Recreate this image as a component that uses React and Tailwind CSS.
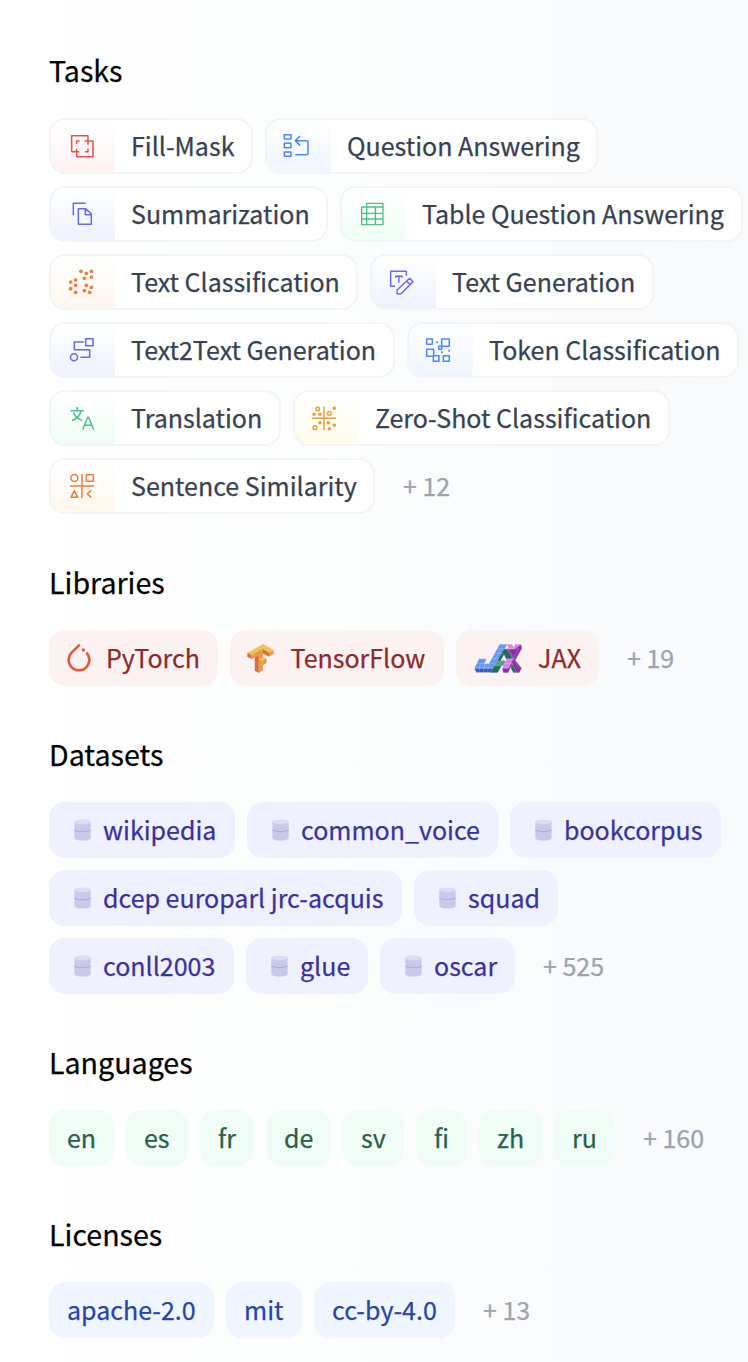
function Icon({ className, children }) {
  return (
    <svg
      viewBox="0 0 72 72"
      className={`mr-0.5 size-6 overflow-visible ${className}`}
      fill="none"
      stroke="currentColor"
      strokeWidth="4.6"
      strokeLinejoin="round"
    >
      {children}
    </svg>
  );
}

const dots = (list, r) =>
  list.map(([x, y]) => <circle key={`${x}-${y}`} cx={x} cy={y} r={r} fill="currentColor" stroke="none" />);

const icons = {
  mask: (
    <>
      <path d="M5 53V5h49v27M5 53h23M20 44v24h49V21H44M20 31V21h9M54 44v9h-9" />
    </>
  ),
  qa: (
    <>
      <path d="M-5 2h20v13H-5zM-5 28h20v13H-5zM-5 54h20v13H-5zM42 6 28 20l14 14M29 20h33q4 0 4 4v34q0 4-4 4H28" />
    </>
  ),
  summary: <path d="M10 40V4h37M25 20h22l17 16v31H25zM46 20v18h18" />,
  table: <path strokeWidth="4" d="M17 15V4h49v11M2 15h64v53H2zM2 34h64M2 51h64M17 15v53M43 15v53" />,
  textClass: dots(
    [[33, 4], [49, 10], [64, 4], [64, 21], [43, 25], [2, 36], [17, 30], [17, 46], [2, 56], [17, 67], [49, 46], [64, 52], [43, 62], [59, 67]],
    5.6
  ),
  textGen: (
    <path strokeWidth="4.4" d="M12 49H-1V4h47v13M14 23v-4h19v4M23.500 19v19M56 25l10 10-36 36H18V60zM47 33l11 11" />
  ),
  t2t: (
    <>
      <path d="M47 2h22v21H47zM41 12H13v23h46v23H31" />
      <circle cx="12" cy="58" r="10.500" />
    </>
  ),
  token: (
    <>
      <path d="M-4 3h17v16H-4zM41 3h23v22H41zM32 25h9v9h-9zM-4 34h21v21H-4zM16 53h17v17H16zM46 53h18v17H46z" />
      {dots([[27, 13], [42, 43], [63, 38]], 3)}
    </>
  ),
  translation: (
    <>
      <path d="M2 14h40M22 3v11M10 20q8 16 26 24M33 15Q29 34 6 44" />
      <path d="M38 71l15-37h3l15 37M44 58h21" />
    </>
  ),
  zeroShot: (
    <>
      <path d="M30 2v71M-6 37h72" />
      <circle cx="11" cy="9" r="5.500" />
      <circle cx="46" cy="22" r="5.500" />
      <circle cx="3" cy="65" r="5.500" />
      {dots([[61, 7], [0, 25], [18, 25], [18, 50], [43, 50], [61, 58], [46, 68]], 5.3)}
    </>
  ),
  similarity: (
    <>
      <circle cx="13" cy="12" r="10.500" />
      <path d="M36 0v73M0 36h72M49 2h21v20H49zM13 50l10 20H3zM64 49 52 59.500 64 70" />
    </>
  ),
};

const tones = {
  red: "to-[#fdf2f2] text-[#e5524c]",
  blue: "to-[#eff5ff] text-[#4d88f3]",
  indigo: "to-[#eff1ff] text-[#6a69ee]",
  green: "to-[#effdf5] text-[#52bd88]",
  orange: "to-[#fff7ee] text-[#ec7f3e]",
  yellow: "to-[#fefcec] text-[#e5a03c]",
};

const tasks = [
  [
    ["Fill-Mask", "mask", "red", "w-[204px]"],
    ["Question Answering", "qa", "blue", "w-[333px]"],
  ],
  [
    ["Summarization", "summary", "indigo", "w-[279px]"],
    ["Table Question Answering", "table", "green", "w-[403px]"],
  ],
  [
    ["Text Classification", "textClass", "orange", "w-[309px]"],
    ["Text Generation", "textGen", "indigo", "w-[284px]"],
  ],
  [
    ["Text2Text Generation", "t2t", "indigo", "w-[346px]"],
    ["Token Classification", "token", "blue", "w-[332px]"],
  ],
  [
    ["Translation", "translation", "green", "w-[232px]"],
    ["Zero-Shot Classification", "zeroShot", "yellow", "w-[377px]"],
  ],
  [["Sentence Similarity", "similarity", "orange", "w-[326px]"]],
];

function Task({ item: [label, icon, tone, width] }) {
  return (
    <div className={`flex h-14 shrink-0 overflow-hidden rounded-2xl border-2 border-gray-100 bg-white text-[#374151] ${width}`}>
      <div className={`flex w-16 shrink-0 items-center justify-center bg-linear-to-b from-white ${tones[tone]}`}>
        <Icon>{icons[icon]}</Icon>
      </div>
      <span className="flex items-center pb-0.5 pl-4">{label}</span>
    </div>
  );
}

function PyTorch() {
  return (
    <svg viewBox="0 0 72 90" className="mr-[15px] h-[30px] w-6 overflow-visible" fill="none">
      <path d="M38 5 14 29a31 31 0 1 0 44 0" stroke="#de5a40" strokeWidth="7.500" />
      <circle cx="49" cy="21" r="5" fill="#de5a40" />
    </svg>
  );
}

function TensorFlow() {
  return (
    <svg viewBox="0 0 80 86" className="mr-[16.500px] -ml-px h-[29px] w-[27px] overflow-visible">
      <path fill="#f0c35a" d="M47 0 79 18 66 26 47 15 14 34 1 26z" />
      <path fill="#dd6a40" d="M1 26 14 33v12L1 38zM23 28 35 22v64L23 79z" />
      <path fill="#e89a49" d="M14 33 35 21v12L14 45zM35 21l12-7v64l-12 8zM47 14l19 11v12L47 27z" />
      <path fill="#e89a49" d="M66 25 79 18v12l-13 7z" />
      <path fill="#dd6a40" d="M47 28l19 9v-10L47 16z" />
      <path fill="#f0c35a" d="M35 46l12-8 11 6-11 8z" />
      <path fill="#e89a49" d="M47 50 58 43v13l-11 7z" />
    </svg>
  );
}

function Jax() {
  return (
    <svg viewBox="0 0 144 86" className="mr-4 h-[29px] w-12 overflow-visible" stroke="#fdf1f1" strokeWidth="0.7">
      <path fill="#6497f3" d="M77 0h23L65 62l-9 10H1l14-28h23l-7 14h14z" />
      <path fill="#3558bd" d="M1 72h55l8-12 2 8-11 17H7z" />
      <path fill="#236b61" d="M90 14h12l34 58-7 14h-11L95 44 71 86H50l4-10z" />
      <path fill="#51a08f" d="M70 50h35v15H61z" />
      <path fill="#fdf1f1" stroke="none" d="m90 31 9 18H80z" />
      <path fill="#db82ef" d="M98 0h16l8 14h-18zM124 0h17l-8 14h-17zM99 44h18l-15 28H84z" />
      <path fill="#8c2ba8" d="M98 14h22l12-6 9-8 3 12-20 36 19 24-7 14h-8L114 58l-11 28H88l-4-14h18l15-28z" />
      <path fill="none" d="M69 14h66M61 28h26M51 43h24M9 58h49M19 58 15 86M33 58 28 86M46 58 40 86M88 2 60 50M92 58h25M104 14l30 58M133 14 104 72" />
    </svg>
  );
}

function Database() {
  return (
    <svg viewBox="0 0 52 66" className="mr-[12.500px] -ml-[0.500px] h-[22px] w-[17px]">
      <path fill="#c9c9ea" d="M1 8h50v50q-4 7-25 7T1 58z" />
      <ellipse cx="26" cy="8" rx="25" ry="7.500" fill="#dcdcf4" />
      <path d="M0 33q6 5 26 5t26-5" fill="none" stroke="#a3a2d8" strokeWidth="2.500" />
    </svg>
  );
}

function Chip({ className, children }) {
  return <div className={`flex h-14 shrink-0 items-center rounded-2xl ${className}`}>{children}</div>;
}

function Label({ children }) {
  return <span className="pb-0.5">{children}</span>;
}

function More({ children }) {
  return <span className="flex h-14 items-center pb-0.5 pl-4 text-[#9ca3af]">{children}</span>;
}

function Section({ title, children }) {
  return (
    <section>
      <h2 className="mb-[27px] flex h-10 items-center pb-0.5 text-[28.6px] text-black">{title}</h2>
      <div className="flex flex-col gap-3">{children}</div>
    </section>
  );
}

function Row({ children }) {
  return <div className="flex gap-3">{children}</div>;
}

const datasets = [
  [
    ["wikipedia", "w-[186px]"],
    ["common_voice", "w-[251px]"],
    ["bookcorpus", "w-[211px]"],
  ],
  [
    ["dcep europarl jrc-acquis", "w-[353px]"],
    ["squad", "w-[144px]"],
  ],
  [
    ["conll2003", "w-[185px]"],
    ["glue", "w-[122px]"],
    ["oscar", "w-[135px]"],
  ],
];

const languages = [
  ["en", "w-[65px]"],
  ["es", "w-[62px]"],
  ["fr", "w-[54px]"],
  ["de", "w-[65px]"],
  ["sv", "w-[61px]"],
  ["fi", "w-[51px]"],
  ["zh", "w-[63px]"],
  ["ru", "w-[61px]"],
];

const licenses = [
  ["apache-2.0", "w-[165px]"],
  ["mit", "w-[76px]"],
  ["cc-by-4.0", "w-[141px]"],
];

export default function App() {
  return (
    <main className="flex h-[1362px] w-[748px] flex-col gap-[49px] overflow-hidden bg-linear-to-r from-white to-gray-50 pt-[51px] pl-[49px] font-['Noto_Sans_CJK_SC','Noto_Sans',sans-serif] text-[25px] leading-10 whitespace-nowrap [-webkit-text-stroke:0.25px_currentColor]">
      <Section title="Tasks">
        {tasks.map((row, i) => (
          <Row key={i}>
            {row.map((item) => (
              <Task key={item[0]} item={item} />
            ))}
            {i === tasks.length - 1 && <More>+ 12</More>}
          </Row>
        ))}
      </Section>
      <Section title="Libraries">
        <Row>
          <Chip className="w-[169px] bg-[#fdf2f2] pl-[18px] text-[#8c2b2a]">
            <PyTorch />
            <Label>PyTorch</Label>
          </Chip>
          <Chip className="w-[214px] bg-[#fdf2f2] pl-[18px] text-[#8c2b2a]">
            <TensorFlow />
            <Label>TensorFlow</Label>
          </Chip>
          <Chip className="w-[143px] bg-[#fdf2f2] pl-[18px] text-[#8c2b2a]">
            <Jax />
            <Label>JAX</Label>
          </Chip>
          <More>+ 19</More>
        </Row>
      </Section>
      <Section title="Datasets">
        {datasets.map((row, i) => (
          <Row key={i}>
            {row.map(([label, width]) => (
              <Chip key={label} className={`bg-[#eff1ff] pl-[25px] text-[#3931a0] ${width}`}>
                <Database />
                <Label>{label}</Label>
              </Chip>
            ))}
            {i === datasets.length - 1 && <More>+ 525</More>}
          </Row>
        ))}
      </Section>
      <Section title="Languages">
        <Row>
          {languages.map(([label, width]) => (
            <Chip key={label} className={`bg-[#effdf6] pl-[18px] text-[#28614a] ${width}`}>
              <Label>{label}</Label>
            </Chip>
          ))}
          <More>+ 160</More>
        </Row>
      </Section>
      <Section title="Licenses">
        <Row>
          {licenses.map(([label, width]) => (
            <Chip key={label} className={`bg-[#eff6ff] pl-[18px] text-[#2743ac] ${width}`}>
              <Label>{label}</Label>
            </Chip>
          ))}
          <More>+ 13</More>
        </Row>
      </Section>
    </main>
  );
}
